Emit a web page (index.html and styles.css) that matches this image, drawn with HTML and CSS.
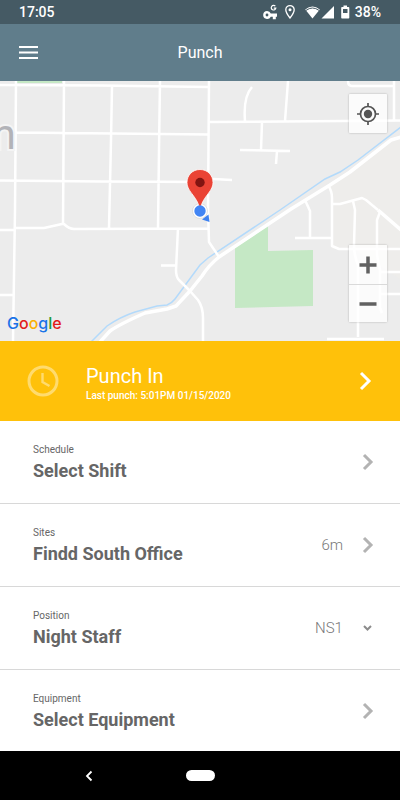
FILE: index.html
```html
<!DOCTYPE html>
<html lang="en">
<head>
<meta charset="utf-8">
<meta name="viewport" content="width=device-width, initial-scale=1">
<title>Punch</title>
<link rel="stylesheet" href="styles.css">
</head>
<body>
<div class="screen">
  <div class="status">
    <span class="status-time">17:05</span>
    <svg class="status-icons" width="88" height="20" viewBox="0 0 88 20" fill="#fff" aria-hidden="true">
      <path fill-rule="evenodd" d="M5 9a4 4 0 0 1 3.800 2.500H15v3.200h-1.200v2.500h-3v-2.500H8.800A4 4 0 1 1 5 9zm0 2.600a1.400 1.400 0 1 0 .01 2.800 1.400 1.400 0 0 0 0-2.800z"/>
      <path d="M13.300 4.200a2.300 2.300 0 1 0 .5 2h-2" fill="none" stroke="#fff" stroke-width="1.200"/>
      <path d="M28 3.600a4.200 4.200 0 0 0-4.200 4.200c0 3 4.200 8.200 4.200 8.200s4.200-5.200 4.200-8.200A4.200 4.200 0 0 0 28 3.600z" fill="none" stroke="#fff" stroke-width="1.300"/>
      <circle cx="28" cy="7.700" r="1.500"/>
      <path d="M43.200 7.500Q50.500 1.500 57.800 7.500L50.500 16.500z"/>
      <path d="M44 8.400Q50.500 3.600 57 8.400" fill="none" stroke="#455a64" stroke-width="1"/>
      <path d="M72 4v12.500H59.500z"/>
      <path fill-rule="evenodd" d="M81.500 3.500h3.500V5h1.500q.8 0 .8.800v10q0 .8-.8.800h-6.500q-.8 0-.8-.800v-10q0-.8.800-.800h1.500zM81 7v4h4.500V7z"/>
    </svg>
    <span class="status-battery">38%</span>
  </div>

  <header class="appbar">
    <button class="menu" aria-label="Menu">
      <svg width="20" height="14" viewBox="0 0 20 14" aria-hidden="true"><path d="M0 1h19M0 6.500h19M0 12h19" stroke="#fff" stroke-width="2"/></svg>
    </button>
    <h1>Punch</h1>
  </header>

  <section class="map" aria-label="Map">
    <svg class="map-art" viewBox="0 81 400 260" preserveAspectRatio="xMidYMid slice" aria-hidden="true">
      <rect y="81" width="400" height="260" fill="#ececec"/>
      <path d="M400 137l-8 2-42 33-20 13 2 53v11h22l46 30z" fill="#eeedeb"/>
      <path d="M17 81h45v2H17zM235 248l33-22v25l45-1v56l-78 2z" fill="#c5e8c5"/>
      <path d="M91 342L107 326Q120 317 135 312L157 306 167 305Q172 303 175 299L200 265 208 258 280 210 325 179 340 172 358 160 401 127" fill="none" stroke="#b3dafb" stroke-width="1.500"/>
      <g class="roads">
        <path d="M0 85L100 85.500 209 87M16 81L15 210 13 341M64 81L63 224M112 86L111 140 109 228M160 81L159 150 158 228M16 132.500L209 134.500M0 180.500L100 181.500 209 182M213 179L232 180M0 230H14M14 228H44L62 224 64 224Q69 229 74 229L208 228.500M0 295H13M161 265.500H176M178 228L176 270Q176 277 179 280L190 291 198 300Q203 307 203 318V341M209 81L208 210 209 242 219 257"/>
        <path d="M252 87Q243 97 245 121M288 81L285 121M209 122L400 120.500M262 122L261 150M240 150L290 151M277 151L276 164M348 81Q348 86 352 86H394M394 81V120"/>
        <path d="M328 185Q332 191 332 198V246L339 249H400M305 200L310 211V238M295 238H332M332 204H340L362 198 366 200 378 210M353 201L355 210 354 245Q354 255 358 265V337M380 212L377 220 377 255 380 270V308L382 313M380 272H400M380 294H400M327 339H384"/>
        <path class="avenue" d="M378 210L401 230"/>
        <path class="avenue" d="M100 342L110 331Q120 324 145 313L167 309 176 306 190 291 202 276Q209 265 219 257L291 209 330 185 350 172 391 140 401 137"/>
      </g>
      <text class="town" x="-21" y="149">m</text>
      <circle cx="200" cy="211" r="7.500" fill="#fff" stroke="#d0d0d0" stroke-width=".6"/>
      <path d="M208.500 214.500l1 7.500-7.500-2.500z" fill="#3e82f1"/>
      <path d="M200 169.500c-7.500 0-13 5.700-13 12.900 0 5 2.800 8.500 6 12.800 3 4.100 5 7.300 5.700 10.400.4 1.300 2.200 1.300 2.600 0 .7-3.100 2.700-6.300 5.700-10.400 3.200-4.300 6-7.800 6-12.800 0-7.200-5.500-12.900-13-12.900z" fill="#ea4335" stroke="#fff" stroke-width=".8"/>
      <circle cx="200" cy="182.500" r="4.700" fill="#811411"/>
      <circle cx="200" cy="211" r="5.700" fill="#4285f4"/>
    </svg>
    <span class="google"><b class="blue">G</b><b class="red">o</b><b class="yellow">o</b><b class="blue">g</b><b class="green">l</b><b class="red">e</b></span>
    <div class="controls">
      <button class="control" aria-label="My location">
        <svg width="22" height="22" viewBox="0 0 22 22" aria-hidden="true"><circle cx="11" cy="11" r="7.500" fill="none" stroke="#555" stroke-width="1.700"/><circle cx="11" cy="11" r="4.200" fill="#555"/><path d="M11 0v4M11 18v4M0 11h4M18 11h4" stroke="#555" stroke-width="1.700"/></svg>
      </button>
      <div class="zoom">
        <button class="control" aria-label="Zoom in">
          <svg width="18" height="18" viewBox="0 0 18 18" aria-hidden="true"><path d="M9 .5v17M.5 9h17" stroke="#616161" stroke-width="3.500"/></svg>
        </button>
        <button class="control" aria-label="Zoom out">
          <svg width="18" height="18" viewBox="0 0 18 18" aria-hidden="true"><path d="M.5 9h17" stroke="#616161" stroke-width="3.500"/></svg>
        </button>
      </div>
    </div>
  </section>

  <main>
    <button class="punch">
      <svg class="clock" width="32" height="32" viewBox="0 0 32 32" fill="none" stroke="#ffdb6e" aria-hidden="true"><circle cx="16" cy="16" r="14" stroke-width="3"/><path d="M15.500 8v9l7 4" stroke-width="2.400"/></svg>
      <span class="text">
        <span class="punch-title">Punch In</span>
        <span class="punch-note">Last punch: 5:01PM 01/15/2020</span>
      </span>
      <svg class="arrow" width="24" height="24" viewBox="0 0 24 24" fill="none" stroke="#fff" stroke-width="3" aria-hidden="true"><path d="M6 4l8 8-8 8"/></svg>
    </button>

    <button class="row">
      <span class="text"><span class="caption">Schedule</span><span class="name">Select Shift</span></span>
      <svg class="arrow" width="24" height="24" viewBox="0 0 24 24" aria-hidden="true"><path d="M9 5l7 7-7 7"/></svg>
    </button>
    <button class="row">
      <span class="text"><span class="caption">Sites</span><span class="name">Findd South Office</span></span>
      <span class="value">6m</span>
      <svg class="arrow" width="24" height="24" viewBox="0 0 24 24" aria-hidden="true"><path d="M9 5l7 7-7 7"/></svg>
    </button>
    <div class="row">
      <label class="text" for="position"><span class="caption">Position</span><span class="name">Night Staff</span></label>
      <select class="value" id="position"><option>NS1</option></select>
      <svg class="arrow down" width="24" height="24" viewBox="0 0 24 24" aria-hidden="true"><path d="M9 10l3.500 3.500L16 10"/></svg>
    </div>
    <button class="row">
      <span class="text"><span class="caption">Equipment</span><span class="name">Select Equipment</span></span>
      <svg class="arrow" width="24" height="24" viewBox="0 0 24 24" aria-hidden="true"><path d="M9 5l7 7-7 7"/></svg>
    </button>
  </main>

  <nav class="nav" aria-label="System">
    <button class="back" aria-label="Back"><svg width="8" height="12" viewBox="0 0 8 12" aria-hidden="true"><path d="M6.500 1.500L2 6l4.500 4.500" fill="none" stroke="#fff" stroke-width="1.800"/></svg></button>
    <button class="home" aria-label="Home"></button>
  </nav>
</div>
</body>
</html>
```
FILE: styles.css
```css
* { box-sizing: border-box; }

body {
  margin: 0;
  font-family: Roboto, "Liberation Sans", sans-serif;
  background: #fff;
}

button, select {
  margin: 0;
  padding: 0;
  border: 0;
  background: none;
  font: inherit;
  color: inherit;
  text-align: left;
}

svg { display: block; flex: none; }

.screen {
  min-height: 100vh;
  display: flex;
  flex-direction: column;
}

.status {
  display: flex;
  align-items: center;
  height: 24px;
  padding: 0 19px;
  background: #455a64;
  color: #fff;
  font-size: 14px;
  font-weight: 500;
}
.status-time { flex: 1; }
.status-icons { margin-right: 5px; }

.appbar {
  display: grid;
  grid-template-columns: 1fr auto 1fr;
  align-items: center;
  height: 57px;
  padding: 0 19px;
  background: #607d8b;
  color: #fff;
}
.appbar h1 {
  margin: 0;
  font-size: 16px;
  font-weight: 400;
}
.menu { justify-self: start; }

.map {
  position: relative;
  height: 260px;
  overflow: hidden;
}
.map-art { width: 100%; height: 100%; }
.roads path {
  fill: none;
  stroke: #fff;
  stroke-width: 2.5;
  stroke-linejoin: round;
}
.roads .avenue { stroke-width: 3.5; }
.town {
  font-size: 42px;
  fill: #b2b3b8;
  stroke: #f4f4f4;
  stroke-width: 4;
  paint-order: stroke;
}
.google {
  position: absolute;
  left: 7px;
  bottom: 6px;
  font: 16px/24px Inter, sans-serif;
}
.google b { font-weight: 500; }
.blue { color: #1a73e8; }
.red { color: #e21b1b; }
.yellow { color: #fbb103; }
.green { color: #1e9b3a; }

.controls {
  position: absolute;
  inset: 13px 13px 19px auto;
  display: flex;
  flex-direction: column;
  justify-content: space-between;
}
.control {
  display: flex;
  align-items: center;
  justify-content: center;
  width: 38px;
  height: 39px;
  background: rgba(255, 255, 255, 0.8);
}
.controls > .control, .zoom { box-shadow: 0 0 2px rgba(0, 0, 0, 0.3); border-radius: 1px; }
.zoom .control + .control { height: 38px; border-top: 1px solid #dadada; }

main { flex: 1; }

.punch, .row {
  display: flex;
  align-items: center;
  width: 100%;
}
.text {
  flex: 1;
  display: flex;
  flex-direction: column;
  padding-top: 2px;
}

.punch {
  height: 80px;
  padding: 0 21px 0 27px;
  background: #ffc10a;
  color: #fff;
}
.punch .text { margin-left: 27px; padding-top: 6px; }
.punch-title { font-size: 20px; line-height: 24px; }
.punch-note { font-size: 10px; line-height: 16px; font-weight: 500; }

.row {
  height: 83px;
  padding: 0 21px 0 33px;
  border-bottom: 1px solid #d8d8d8;
  background: #fff;
  color: #666;
}
.row:last-child { height: 81px; border-bottom: 0; }
.caption { font-size: 10px; line-height: 16px; }
.name { font-size: 18px; line-height: 26px; font-weight: 700; }
.value {
  margin-right: 12px;
  font-size: 15px;
  font-weight: 300;
  color: #777;
  appearance: none;
}
.row .arrow { fill: none; stroke: #b3b3b3; stroke-width: 3; }
.row .down { stroke: #8c8c8c; stroke-width: 2; }

.nav {
  display: grid;
  grid-template-columns: 1fr auto 1fr;
  align-items: center;
  height: 49px;
  background: #000;
}
.back { justify-self: center; margin-right: 22px; margin-left: 0; }
.back { margin-right: 8px; }
.home {
  width: 29px;
  height: 11px;
  border-radius: 6px;
  background: #fff;
}
```
